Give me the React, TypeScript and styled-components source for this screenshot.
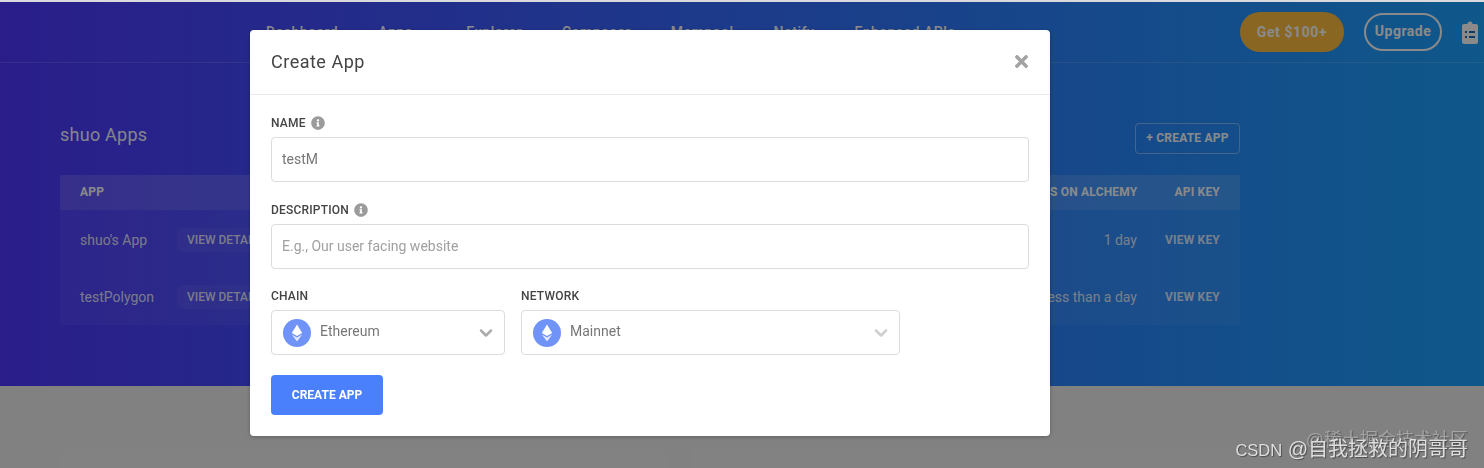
import React from 'react';
import styled, { createGlobalStyle } from 'styled-components';
import { FaInfoCircle, FaTimes } from 'react-icons/fa';
import { FiChevronDown } from 'react-icons/fi';

const GlobalStyle = createGlobalStyle`
  html, body {
    margin: 0;
    height: 100%;
    overflow: hidden;
    background: #fff;
  }
  body {
    font-family: Roboto, "Liberation Sans", sans-serif;
  }
  * {
    box-sizing: border-box;
  }
`;

const Page = styled.div`
  height: 468px;
  border-top: 2px solid #d9d9de;
  overflow: hidden;
`;

const Hero = styled.section`
  height: 384px;
  background: linear-gradient(90deg, #4e37ff 0%, #1ca3ff 100%);
  color: #fff;
`;

const NavBar = styled.header`
  display: flex;
  align-items: center;
  height: 61px;
  padding: 0 6px 0 266px;
  border-bottom: 1px solid rgba(255, 255, 255, 0.14);
`;

const NavLinks = styled.nav`
  display: flex;
  gap: 40px;
`;

const NavLink = styled.a<{ $wide?: boolean }>`
  margin-right: ${({ $wide }) => ($wide ? 14 : 0)}px;
  font-size: 14px;
  font-weight: 500;
  letter-spacing: 0.5px;
  color: #fff;
`;

const NavActions = styled.div`
  display: flex;
  align-items: center;
  margin-left: auto;
`;

const RewardPill = styled.button`
  width: 104px;
  height: 40px;
  border: none;
  border-radius: 20px;
  background: #fdbd3e;
  color: #fff;
  font: 700 14px Roboto, sans-serif;
  letter-spacing: 0.6px;
`;

const UpgradePill = styled.button`
  width: 78px;
  height: 38px;
  margin: 0 20px;
  padding: 0 0 2px;
  border: 2px solid #fff;
  border-radius: 19px;
  background: transparent;
  color: #fff;
  font: 700 14px Roboto, sans-serif;
  letter-spacing: 0.5px;
`;

const Main = styled.main`
  padding: 60px 244px 0 60px;
`;

const TitleRow = styled.div`
  display: flex;
  align-items: flex-start;
  justify-content: space-between;
  height: 52px;
`;

const Title = styled.h1`
  margin: 0;
  font-size: 18px;
  line-height: 24px;
  font-weight: 400;
  letter-spacing: 0.25px;
  color: #f4f6ff;
`;

const OutlineButton = styled.button`
  height: 31px;
  width: 105px;
  padding: 0 0 2px;
  border: 1px solid rgba(255, 255, 255, 0.4);
  border-radius: 4px;
  background: transparent;
  color: #fff;
  font: 700 12px Roboto, sans-serif;
  letter-spacing: 0.2px;
`;

const Table = styled.div`
  background: rgba(255, 255, 255, 0.05);
`;

const HeadRow = styled.div`
  display: flex;
  align-items: center;
  justify-content: space-between;
  height: 35px;
  margin-bottom: 1px;
  padding: 0 20px 2px;
  background: rgba(255, 255, 255, 0.1);
  font-size: 12px;
  font-weight: 700;
  letter-spacing: 0.2px;
  color: #fff;
`;

const BodyRow = styled.div`
  display: flex;
  align-items: center;
  height: 57px;
  padding: 0 20px;
  font-size: 14px;
  color: rgba(255, 255, 255, 0.85);
`;

const AppName = styled.span`
  width: 97px;
`;

const DetailsTag = styled.span`
  padding: 5px 10px;
  border-radius: 6px;
  background: rgba(255, 255, 255, 0.05);
  font-size: 12px;
  font-weight: 500;
`;

const Age = styled.span`
  margin-left: auto;
`;

const KeyLink = styled.span`
  width: 83px;
  text-align: right;
  font-size: 12px;
  font-weight: 700;
  letter-spacing: 0.2px;
`;

const HeadRight = styled.div`
  display: flex;
  gap: 37px;
`;

const Footer = styled.section`
  display: flex;
  gap: 22px;
  height: 82px;
  padding: 61px 244px 0 60px;
  background: #eeeeee;
`;

const FooterCard = styled.div<{ $grow: number }>`
  flex: ${({ $grow }) => $grow};
  height: 60px;
  border-radius: 10px;
  background: #f1f1f1;
`;

const Backdrop = styled.div`
  position: fixed;
  inset: 2px 0 0 0;
  background: rgba(0, 0, 0, 0.46);
`;

const Modal = styled.div`
  position: fixed;
  top: 30px;
  left: 250px;
  width: 800px;
  height: 406px;
  border-radius: 4px;
  background: #fff;
  box-shadow: 0 1px 4px rgba(0, 0, 0, 0.25);
  color: #444;
`;

const ModalHead = styled.div`
  display: flex;
  align-items: center;
  justify-content: space-between;
  height: 65px;
  padding: 0 19px 2px 21px;
  border-bottom: 1px solid #e9e9e9;
`;

const ModalTitle = styled.h2`
  margin: 0;
  font-size: 18px;
  font-weight: 400;
  letter-spacing: 0.5px;
  color: #444;
`;

const CloseIcon = styled(FaTimes)`
  width: 19px;
  height: 19px;
  color: #a3a3a3;
`;

const ModalBody = styled.div`
  padding: 20px 21px;
`;

const Field = styled.div<{ $tight?: boolean }>`
  margin-bottom: ${({ $tight }) => ($tight ? 19 : 20)}px;
`;

const Label = styled.label`
  display: flex;
  align-items: center;
  gap: 5px;
  height: 15px;
  margin-bottom: 7px;
  font-size: 12px;
  font-weight: 500;
  letter-spacing: 0.2px;
  color: #444;
`;

const InfoIcon = styled(FaInfoCircle)`
  width: 14px;
  height: 14px;
  color: #9b9b9b;
`;

const TextInput = styled.input`
  display: block;
  width: 758px;
  height: 45px;
  padding: 0 10px 1px;
  border: 1px solid #dcdcdc;
  border-radius: 4px;
  font: 400 14px Roboto, sans-serif;
  color: #777;

  &::placeholder {
    color: #a0a0a0;
    opacity: 1;
  }
`;

const SelectRow = styled.div`
  display: flex;
  gap: 16px;
  margin-bottom: 20px;
`;

const SelectBox = styled.div<{ $width: number }>`
  display: flex;
  align-items: center;
  gap: 9px;
  width: ${({ $width }) => $width}px;
  height: 45px;
  padding: 0 8px 0 11px;
  border: 1px solid #dcdcdc;
  border-radius: 4px;
  font-size: 14px;
  color: #777;
`;

const SelectValue = styled.span`
  margin-top: -3px;
`;

const Chevron = styled(FiChevronDown)<{ $light?: boolean }>`
  width: 20px;
  height: 20px;
  margin-left: auto;
  color: ${({ $light }) => ($light ? '#cfcfcf' : '#ababab')};
  stroke-width: 3;
`;

const PrimaryButton = styled.button`
  display: block;
  width: 112px;
  height: 40px;
  border: none;
  border-radius: 4px;
  background: #4a80fb;
  color: #fff;
  font: 700 12px Roboto, sans-serif;
`;

const Watermark = styled.div`
  position: fixed;
  right: 16px;
  font-family: "Liberation Sans", "Noto Sans CJK SC", sans-serif;
  line-height: 22px;
  white-space: nowrap;
`;

const CsdnMark = styled(Watermark)`
  top: 438px;
  font-size: 20px;
  color: #dedede;
  text-shadow: 1px 1px 1px #4c4c4c;
`;

const CsdnName = styled.span`
  font-size: 16.5px;
`;

const JuejinMark = styled(Watermark)`
  top: 429px;
  font-size: 18px;
  color: rgba(175, 175, 175, 0.8);
  text-shadow: 1px 1px 1px #555;
`;

const EthIcon = () => (
  <svg width="28" height="28" viewBox="0 0 28 28">
    <circle cx="14" cy="14" r="14" fill="#6f93f7" />
    <path d="M14 5.5 L19.2 14 L14 17 L8.8 14 Z" fill="#fff" />
    <path d="M8.8 15.4 L14 18.4 L19.2 15.4 L14 22.5 Z" fill="#fff" opacity="0.8" />
  </svg>
);

const ClipboardIcon = () => (
  <svg width="16" height="23" viewBox="0 0 16 23">
    <path
      d="M2 3h3.5a2.5 2.5 0 0 1 5 0H14a2 2 0 0 1 2 2v16a2 2 0 0 1-2 2H2a2 2 0 0 1-2-2V5a2 2 0 0 1 2-2z"
      fill="#fff"
    />
    <path d="M3 10h2v2H3zM7 10h6v2H7zM3 15h2v2H3zM7 15h6v2H7z" fill="#1a6fb5" />
  </svg>
);

const navItems = ['Dashboard', 'Apps', 'Explorer', 'Composer', 'Mempool', 'Notify', 'Enhanced APIs'];

const apps = [
  { name: "shuo's App", age: '1 day' },
  { name: 'testPolygon', age: 'Less than a day' },
];

const App: React.FC = () => {
  return (
    <>
      <GlobalStyle />
      <Page>
        <Hero>
          <NavBar>
            <NavLinks>
              {navItems.map((item) => (
                <NavLink key={item} $wide={item === 'Apps'}>
                  {item}
                </NavLink>
              ))}
            </NavLinks>
            <NavActions>
              <RewardPill>Get $100+</RewardPill>
              <UpgradePill>Upgrade</UpgradePill>
              <ClipboardIcon />
            </NavActions>
          </NavBar>
          <Main>
            <TitleRow>
              <Title>shuo Apps</Title>
              <OutlineButton>+ CREATE APP</OutlineButton>
            </TitleRow>
            <Table>
              <HeadRow>
                <span>APP</span>
                <HeadRight>
                  <span>DAYS ON ALCHEMY</span>
                  <span>API KEY</span>
                </HeadRight>
              </HeadRow>
              {apps.map((app) => (
                <BodyRow key={app.name}>
                  <AppName>{app.name}</AppName>
                  <DetailsTag>VIEW DETAILS</DetailsTag>
                  <Age>{app.age}</Age>
                  <KeyLink>VIEW KEY</KeyLink>
                </BodyRow>
              ))}
            </Table>
          </Main>
        </Hero>
        <Footer>
          <FooterCard $grow={608} />
          <FooterCard $grow={550} />
        </Footer>
      </Page>
      <Backdrop />
      <Modal>
        <ModalHead>
          <ModalTitle>Create App</ModalTitle>
          <CloseIcon />
        </ModalHead>
        <ModalBody>
          <Field>
            <Label>
              NAME <InfoIcon />
            </Label>
            <TextInput defaultValue="testM" />
          </Field>
          <Field $tight>
            <Label>
              DESCRIPTION <InfoIcon />
            </Label>
            <TextInput placeholder="E.g., Our user facing website" />
          </Field>
          <SelectRow>
            <div>
              <Label>CHAIN</Label>
              <SelectBox $width={234}>
                <EthIcon />
                <SelectValue>Ethereum</SelectValue>
                <Chevron />
              </SelectBox>
            </div>
            <div>
              <Label>NETWORK</Label>
              <SelectBox $width={379}>
                <EthIcon />
                <SelectValue>Mainnet</SelectValue>
                <Chevron $light />
              </SelectBox>
            </div>
          </SelectRow>
          <PrimaryButton>CREATE APP</PrimaryButton>
        </ModalBody>
      </Modal>
      <JuejinMark>@稀土掘金技术社区</JuejinMark>
      <CsdnMark>
        <CsdnName>CSDN</CsdnName> @自我拯救的阴哥哥
      </CsdnMark>
    </>
  );
};

export default App;
